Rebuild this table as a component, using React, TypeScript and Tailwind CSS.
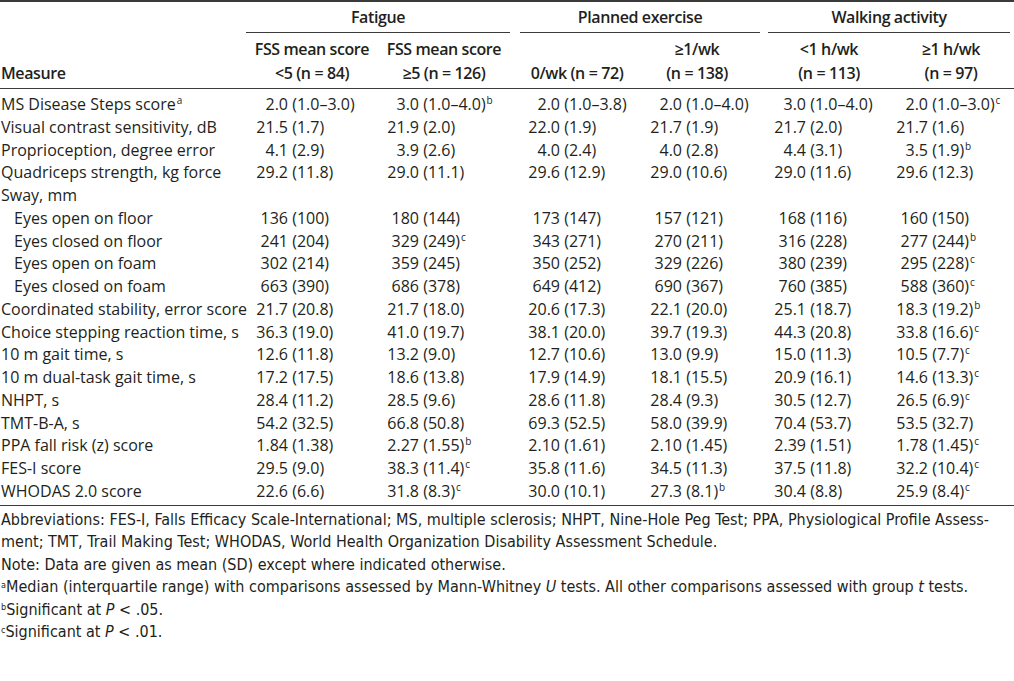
const colPad = ["pl-[6px]", "pl-[5px]", "pl-[4px]", "pl-[12px]", "pl-[2px]", "pl-[2px]"];

type Row = { label: string; sup?: string; indent?: boolean; values?: string[] };

const rows: Row[] = [
  { label: "MS Disease Steps score", sup: "a", values: ["2.0 (1.0–3.0)", "3.0 (1.0–4.0)|b", "2.0 (1.0–3.8)", "2.0 (1.0–4.0)", "3.0 (1.0–4.0)", "2.0 (1.0–3.0)|c"] },
  { label: "Visual contrast sensitivity, dB", values: ["21.5 (1.7)", "21.9 (2.0)", "22.0 (1.9)", "21.7 (1.9)", "21.7 (2.0)", "21.7 (1.6)"] },
  { label: "Proprioception, degree error", values: ["4.1 (2.9)", "3.9 (2.6)", "4.0 (2.4)", "4.0 (2.8)", "4.4 (3.1)", "3.5 (1.9)|b"] },
  { label: "Quadriceps strength, kg force", values: ["29.2 (11.8)", "29.0 (11.1)", "29.6 (12.9)", "29.0 (10.6)", "29.0 (11.6)", "29.6 (12.3)"] },
  { label: "Sway, mm" },
  { label: "Eyes open on floor", indent: true, values: ["136 (100)", "180 (144)", "173 (147)", "157 (121)", "168 (116)", "160 (150)"] },
  { label: "Eyes closed on floor", indent: true, values: ["241 (204)", "329 (249)|c", "343 (271)", "270 (211)", "316 (228)", "277 (244)|b"] },
  { label: "Eyes open on foam", indent: true, values: ["302 (214)", "359 (245)", "350 (252)", "329 (226)", "380 (239)", "295 (228)|c"] },
  { label: "Eyes closed on foam", indent: true, values: ["663 (390)", "686 (378)", "649 (412)", "690 (367)", "760 (385)", "588 (360)|c"] },
  { label: "Coordinated stability, error score", values: ["21.7 (20.8)", "21.7 (18.0)", "20.6 (17.3)", "22.1 (20.0)", "25.1 (18.7)", "18.3 (19.2)|b"] },
  { label: "Choice stepping reaction time, s", values: ["36.3 (19.0)", "41.0 (19.7)", "38.1 (20.0)", "39.7 (19.3)", "44.3 (20.8)", "33.8 (16.6)|c"] },
  { label: "10 m gait time, s", values: ["12.6 (11.8)", "13.2 (9.0)", "12.7 (10.6)", "13.0 (9.9)", "15.0 (11.3)", "10.5 (7.7)|c"] },
  { label: "10 m dual-task gait time, s", values: ["17.2 (17.5)", "18.6 (13.8)", "17.9 (14.9)", "18.1 (15.5)", "20.9 (16.1)", "14.6 (13.3)|c"] },
  { label: "NHPT, s", values: ["28.4 (11.2)", "28.5 (9.6)", "28.6 (11.8)", "28.4 (9.3)", "30.5 (12.7)", "26.5 (6.9)|c"] },
  { label: "TMT-B-A, s", values: ["54.2 (32.5)", "66.8 (50.8)", "69.3 (52.5)", "58.0 (39.9)", "70.4 (53.7)", "53.5 (32.7)"] },
  { label: "PPA fall risk (z) score", values: ["1.84 (1.38)", "2.27 (1.55)|b", "2.10 (1.61)", "2.10 (1.45)", "2.39 (1.51)", "1.78 (1.45)|c"] },
  { label: "FES-I score", values: ["29.5 (9.0)", "38.3 (11.4)|c", "35.8 (11.6)", "34.5 (11.3)", "37.5 (11.8)", "32.2 (10.4)|c"] },
  { label: "WHODAS 2.0 score", values: ["22.6 (6.6)", "31.8 (8.3)|c", "30.0 (10.1)", "27.3 (8.1)|b", "30.4 (8.8)", "25.9 (8.4)|c"] },
];

const grid = "grid grid-cols-[246px_132px_132px_10px_114px_126px_8px_122px_122px]";

function Sup({ children }: { children: string }) {
  return <sup className="text-[10px] top-[-0.6em] ml-px">{children}</sup>;
}

function Value({ v, col }: { v: string; col: number }) {
  const [text, sup] = v.split("|");
  const i = text.indexOf(" ");
  return (
    <div className={`whitespace-nowrap ${colPad[col]}`}>
      <span className="inline-block w-[36px] text-right">{text.slice(0, i)}</span>
      <span> {text.slice(i + 1)}</span>
      {sup && <Sup>{sup}</Sup>}
    </div>
  );
}

function DataRow({ row }: { row: Row }) {
  const v = row.values;
  return (
    <div className={`${grid} h-[22.75px] items-center`}>
      <div className={`whitespace-nowrap ${row.indent ? "pl-[14px]" : "pl-px"}`}>
        {row.label}
        {row.sup && <Sup>{row.sup}</Sup>}
      </div>
      {v ? (
        <>
          <Value v={v[0]} col={0} />
          <Value v={v[1]} col={1} />
          <div />
          <Value v={v[2]} col={2} />
          <Value v={v[3]} col={3} />
          <div />
          <Value v={v[4]} col={4} />
          <Value v={v[5]} col={5} />
        </>
      ) : null}
    </div>
  );
}

function Head({ top, bottom }: { top?: string; bottom: string }) {
  return (
    <div className="flex flex-col justify-end items-center leading-[24px]">
      {top && <div>{top}</div>}
      <div>{bottom}</div>
    </div>
  );
}

export default function App() {
  return (
    <div className="w-[1014px] h-[681px] bg-white text-[#231f20] font-['Open_Sans',sans-serif] text-[16px] overflow-hidden">
      <div className="h-[2px] bg-[#3a3a3a]" />

      {/* group headings */}
      <div className={`${grid} h-[31px] font-semibold tracking-[-0.4px]`}>
        <div />
        <div className="col-span-2 flex items-center justify-center border-b border-[#3a3a3a]">Fatigue</div>
        <div />
        <div className="col-span-2 flex items-center justify-center border-b border-[#3a3a3a]">Planned exercise</div>
        <div />
        <div className="col-span-2 flex items-center justify-center border-b border-[#3a3a3a] mr-[2px]">Walking activity</div>
      </div>

      {/* column headings */}
      <div className={`${grid} pt-[4px] pb-[3px] border-b border-[#3a3a3a] font-semibold tracking-[-0.4px]`}>
        <div className="flex items-end leading-[24px] pl-px">Measure</div>
        <Head top="FSS mean score" bottom="<5 (n = 84)" />
        <Head top="FSS mean score" bottom="≥5 (n = 126)" />
        <div />
        <Head bottom="0/wk (n = 72)" />
        <Head top="≥1/wk" bottom="(n = 138)" />
        <div />
        <Head top="<1 h/wk" bottom="(n = 113)" />
        <Head top="≥1 h/wk" bottom="(n = 97)" />
      </div>

      <div className="pt-[3px] pb-[3px] border-b border-[#3a3a3a]">
        {rows.map((r) => (
          <DataRow key={r.label} row={r} />
        ))}
      </div>

      <div className="pt-[3px] pl-px font-['DejaVu_Sans_Condensed',sans-serif] text-[16px] leading-[22.6px]">
        <div>
          Abbreviations: FES-I, Falls Efficacy Scale-International; MS, multiple sclerosis; NHPT, Nine-Hole Peg Test; PPA, Physiological Profile Assess-
        </div>
        <div>ment; TMT, Trail Making Test; WHODAS, World Health Organization Disability Assessment Schedule.</div>
        <div>Note: Data are given as mean (SD) except where indicated otherwise.</div>
        <div className="whitespace-nowrap">
          <sup className="text-[9px]">a</sup>Median (interquartile range) with comparisons assessed by Mann-Whitney <i>U</i> tests. All other
          comparisons assessed with group <i>t</i> tests.
        </div>
        <div>
          <sup className="text-[9px]">b</sup>Significant at <i>P</i> &lt; .05.
        </div>
        <div>
          <sup className="text-[9px]">c</sup>Significant at <i>P</i> &lt; .01.
        </div>
      </div>
    </div>
  );
}
